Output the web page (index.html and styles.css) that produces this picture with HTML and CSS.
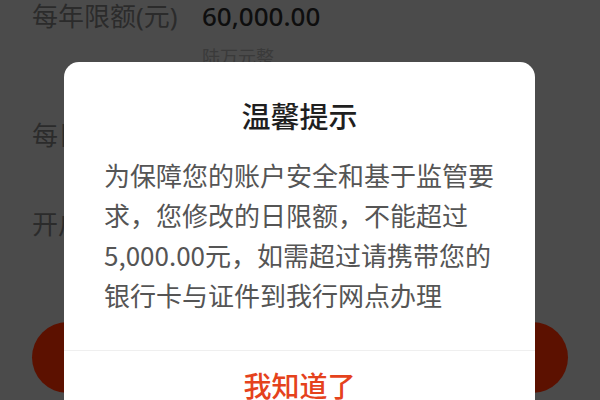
FILE: index.html
```html
<!DOCTYPE html>
<html lang="zh-CN">
<head>
<meta charset="utf-8">
<title>温馨提示</title>
<link rel="stylesheet" href="styles.css">
</head>
<body>
<div class="page">
  <div class="row row-first">
    <div class="label">每年限额(元)</div>
    <div class="value">
      <div class="amount">60,000.00</div>
      <div class="words">陆万元整</div>
    </div>
  </div>
  <div class="row row-second">
    <div class="label">每日限额(元)</div>
    <div class="value"><div class="amount">5,000.00</div></div>
  </div>
  <div class="row row-third">
    <div class="label">开户网点</div>
    <div class="value"></div>
  </div>
  <div class="submit">确定</div>
</div>

<div class="overlay">
  <div class="modal">
    <div class="modal-title">温馨提示</div>
    <div class="modal-body">为保障您的账户安全和基于监管要求，您修改的日限额，不能超过5,000.00元，如需超过请携带您的银行卡与证件到我行网点办理</div>
    <div class="modal-action">我知道了</div>
  </div>
</div>
</body>
</html>
```

FILE: styles.css
```css
html, body {
  margin: 0;
  padding: 0;
}

body {
  width: 600px;
  height: 400px;
  overflow: hidden;
  background: #4b4b4b;
  font-family: "Noto Sans", "Noto Sans CJK SC", sans-serif;
  position: relative;
}

.page {
  padding: 0 32px;
}

.row {
  display: grid;
  grid-template-columns: 170px 1fr;
  font-size: 26px;
  line-height: 32px;
}

.row-first {
  padding-top: 0;
}

.row-second {
  margin-top: 50px;
}

.row-third {
  margin-top: 57px;
}

.label {
  color: #2b2b2b;
}

.amount {
  color: #0e0e0e;
  font-weight: 500;
}

.words {
  margin-top: 13px;
  font-size: 18px;
  line-height: 24px;
  color: #3a3a3a;
}

.submit {
  margin-top: 82px;
  height: 71px;
  border-radius: 36px;
  background: #5c1100;
  color: #4b4b4b;
  font-size: 28px;
  line-height: 71px;
  text-align: center;
}

.overlay {
  position: absolute;
  inset: 0;
}

.modal {
  position: absolute;
  left: 64px;
  top: 62px;
  width: 471px;
  height: 400px;
  background: #ffffff;
  border-radius: 15px;
  font-family: "Noto Sans CJK SC", sans-serif;
}

.modal-title {
  padding-top: 33px;
  font-size: 29px;
  line-height: 40px;
  text-align: center;
  color: #1f1f1f;
  font-weight: 500;
}

.modal-body {
  margin-top: 20px;
  padding: 0 37px 35px 40px;
  font-size: 26px;
  line-height: 40px;
  color: #555555;
  border-bottom: 1px solid #efefef;
}

.modal-action {
  padding-top: 14px;
  font-size: 28px;
  line-height: 40px;
  text-align: center;
  color: #e5421c;
  font-weight: 500;
}
```
